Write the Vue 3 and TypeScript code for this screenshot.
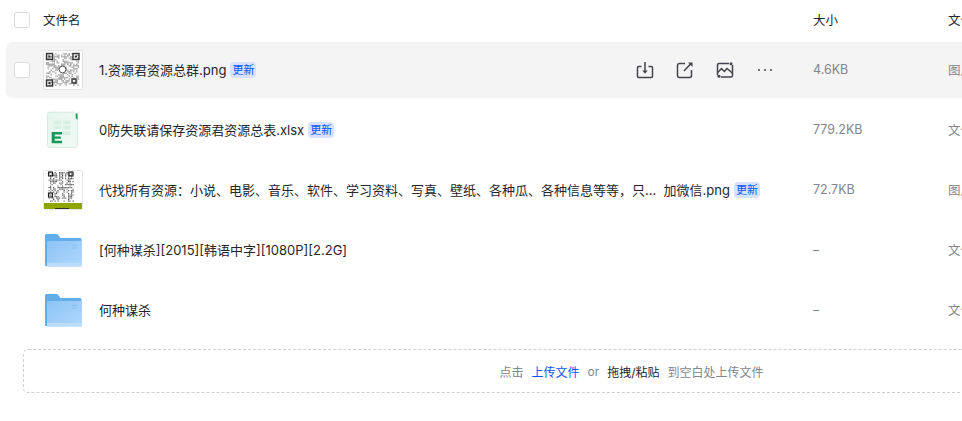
<template>
  <div class="page">
    <div class="list">
      <div class="head">
        <span class="check"></span>
        <span class="col-name lift">文件名</span>
        <span class="col-size lift">大小</span>
        <span class="col-type lift">文件类型</span>
      </div>

      <div v-for="(file, i) in files" :key="file.name" class="row" :class="{ active: i === 0 }">
        <span class="check" :class="{ hidden: i !== 0 }"></span>
        <div class="col-name name-cell">
          <div class="thumb">
            <svg v-if="file.kind === 'qr'" class="qr" width="40" height="40" viewBox="0 0 40 40">
              <rect x="0.5" y="0.5" width="39" height="39" rx="1.5" fill="#fff" stroke="#e2e2e2" />
              <rect v-for="c in qrCells" :key="c.x + '-' + c.y" :x="c.x" :y="c.y" width="1.5" height="1.5" fill="#555" :opacity="c.o" />
              <g fill="none" stroke="#333" stroke-width="1.4">
                <rect x="3.5" y="3.5" width="6" height="6" />
                <rect x="30" y="3.5" width="6" height="6" />
                <rect x="3.5" y="30" width="6" height="6" />
                <rect x="29" y="29" width="4" height="4" />
              </g>
              <g fill="#333">
                <rect x="5.5" y="5.5" width="2" height="2" />
                <rect x="32" y="5.5" width="2" height="2" />
                <rect x="5.5" y="32" width="2" height="2" />
              </g>
              <circle cx="19.5" cy="19.5" r="3.4" fill="#fff" stroke="#555" stroke-width="1" />
            </svg>

            <svg v-else-if="file.kind === 'poster'" class="qr" width="40" height="40" viewBox="0 0 40 40">
              <rect x="0.5" y="0.5" width="39" height="39" rx="1.5" fill="#fff" stroke="#e8e8e8" />
              <rect v-for="c in posterCells" :key="c.x + '-' + c.y" :x="c.x" :y="c.y" width="1.2" height="1.2" fill="#222" :opacity="c.o" />
              <g fill="none" stroke="#222" stroke-width="1.1">
                <rect x="5.5" y="2" width="4" height="4" />
                <rect x="26" y="2" width="4" height="4" />
                <rect x="5.5" y="23" width="4" height="4" />
              </g>
              <rect x="1" y="33" width="38" height="6" fill="#8fa600" />
              <rect x="12" y="38" width="14" height="1" fill="#333" />
            </svg>

            <svg v-else-if="file.kind === 'excel'" width="32" height="38" viewBox="0 0 34 40">
              <defs>
                <linearGradient id="sheet" x1="0" y1="0" x2="1" y2="1">
                  <stop offset="0" stop-color="#e6f5ee" />
                  <stop offset="1" stop-color="#f2faf6" />
                </linearGradient>
              </defs>
              <path d="M3 1h26l3.500 3.500V36a2.500 2.500 0 0 1-2.500 2.500H3A2.500 2.500 0 0 1 .5 36V3.500A2.500 2.500 0 0 1 3 1z" fill="url(#sheet)" stroke="#d5ebdf" />
              <path d="M30.500 2.500h2v6.500l-2-1.500z" fill="#1b9d5c" />
              <g fill="#d8efe3">
                <rect x="7" y="10" width="8" height="4" />
                <rect x="17" y="10" width="8" height="4" />
                <rect x="7" y="15.500" width="8" height="3.500" />
                <rect x="17" y="15.500" width="8" height="4" />
                <rect x="17" y="21.500" width="8" height="4" />
              </g>
              <path d="M5 22h11v2.800H8.200v2.100h6.500v2.500H8.200v2H16V34H5z" fill="#17985a" />
            </svg>

            <svg v-else width="38" height="36" viewBox="0 0 38 36">
              <defs>
                <linearGradient id="folder" x1="0" y1="0" x2="1" y2="1">
                  <stop offset="0" stop-color="#8cc3f4" />
                  <stop offset="1" stop-color="#b0d8fd" />
                </linearGradient>
              </defs>
              <path d="M1 3.500C1 2.700 1.700 2 2.500 2h10.300c.6 0 1 .3 1.300.7L16.500 6H36c.9 0 1.500.7 1.500 1.500V34H2c-.6 0-1-.4-1-1z" fill="#62aeec" />
              <path d="M3 9h33.500c.6 0 1 .4 1 1v24.500H3z" fill="url(#folder)" />
              <rect x="3" y="31" width="34.500" height="3.500" fill="#bcdcfb" />
              <g fill="#86bff2">
                <rect x="28" y="13" width="5" height="1" />
                <rect x="28" y="15.500" width="5" height="1" />
              </g>
            </svg>
          </div>
          <span class="file-name lift">{{ file.name }}</span>
          <span v-if="file.fresh" class="badge">更新</span>
          <div v-if="i === 0" class="actions">
            <svg width="20" height="20" viewBox="0 0 20 20" fill="none" stroke="#44454c" stroke-width="1.500">
              <path d="M6.500 6.500H3.700A1.200 1.200 0 0 0 2.500 7.700v8.600a1.200 1.200 0 0 0 1.200 1.200h12.600a1.200 1.200 0 0 0 1.200-1.200V7.700a1.200 1.200 0 0 0-1.200-1.200h-2.800" />
              <path d="M10 2v10" />
              <path d="M7.300 10.500h5.400L10 13.800z" fill="#44454c" stroke="none" />
            </svg>
            <svg width="20" height="20" viewBox="0 0 20 20" fill="none" stroke="#44454c" stroke-width="1.500">
              <path d="M10 3.500H4.500a2 2 0 0 0-2 2v10a2 2 0 0 0 2 2h10a2 2 0 0 0 2-2V10" />
              <path d="M9 11l7-7.500" />
              <path d="M13 2.500h4.500V7z" fill="#44454c" stroke="none" />
            </svg>
            <svg width="20" height="20" viewBox="0 0 20 20" fill="none" stroke="#44454c" stroke-width="1.500">
              <path d="M14 3.500H4a1.500 1.500 0 0 0-1.500 1.500v10.500" />
              <path d="M6 17H16a1.500 1.500 0 0 0 1.500-1.500V5" />
              <path d="M2.700 12.500l3.800-4 2.800 3 2.700-3 5.300 4.500" />
              <circle cx="16" cy="3.800" r="1.500" fill="#44454c" stroke="none" />
              <circle cx="4" cy="16.200" r="1.500" fill="#44454c" stroke="none" />
            </svg>
            <svg width="20" height="20" viewBox="0 0 20 20" fill="#44454c">
              <circle cx="4" cy="10" r="1" />
              <circle cx="10" cy="10" r="1" />
              <circle cx="16" cy="10" r="1" />
            </svg>
          </div>
        </div>
        <span class="col-size muted lift">{{ file.size }}</span>
        <span class="col-type muted lift">{{ file.type }}</span>
      </div>

      <div class="upload">
        <span class="muted">点击</span>
        <span class="link">上传文件</span>
        <span class="muted">or</span>
        <span class="strong">拖拽/粘贴</span>
        <span class="muted">到空白处上传文件</span>
      </div>
    </div>
  </div>
</template>

<script setup lang="ts">
interface FileRow {
  name: string;
  kind: 'qr' | 'poster' | 'excel' | 'folder';
  size: string;
  type: string;
  fresh: boolean;
}

const files: FileRow[] = [
  { name: '1.资源君资源总群.png', kind: 'qr', size: '4.6KB', type: '图片', fresh: true },
  { name: '0防失联请保存资源君资源总表.xlsx', kind: 'excel', size: '779.2KB', type: '文件', fresh: true },
  {
    name: '代找所有资源：小说、电影、音乐、软件、学习资料、写真、壁纸、各种瓜、各种信息等等，只…  加微信.png',
    kind: 'poster',
    size: '72.7KB',
    type: '图片',
    fresh: true
  },
  { name: '[何种谋杀][2015][韩语中字][1080P][2.2G]', kind: 'folder', size: '–', type: '文件夹', fresh: false },
  { name: '何种谋杀', kind: 'folder', size: '–', type: '文件夹', fresh: false }
];

// 伪随机，保证每次画出来的二维码一样
function noise(x: number, y: number): number {
  const v = Math.sin(x * 12.9898 + y * 78.233) * 43758.5453;
  return v - Math.floor(v);
}

function cells(x0: number, x1: number, y0: number, y1: number, step: number, base: number) {
  const out: { x: number; y: number; o: number }[] = [];
  for (let y = y0; y < y1; y += step) {
    for (let x = x0; x < x1; x += step) {
      const n = noise(x, y);
      if (n > 0.5) out.push({ x, y, o: base + n * 0.4 });
    }
  }
  return out;
}

const qrCells = cells(3, 36, 3, 36, 1.5, 0.15);
const posterCells = cells(5.5, 31, 2, 31, 1.5, 0.4);
</script>

<style scoped>
.page {
  width: 962px;
  height: 421px;
  overflow: hidden;
  background: #fff;
  font-family: Inter, "Noto Sans CJK SC", "Liberation Sans", sans-serif;
  font-size: 12.500px;
  color: #25262b;
}

.list {
  width: 1234px;
  padding-left: 6px;
}

.head,
.row {
  display: flex;
  align-items: center;
  padding-left: 8px;
}

.head {
  height: 40px;
  margin-bottom: 2px;
}

.row {
  height: 56px;
  margin-bottom: 4px;
  border-radius: 6px 0 0 6px;
}

.row.active {
  background: #f4f4f4;
}

.check {
  flex: none;
  width: 14px;
  height: 14px;
  background: #fff;
  border: 1px solid #dcdcdc;
  border-radius: 3px;
}

.check.hidden {
  visibility: hidden;
}

.lift {
  margin-bottom: 2px;
}

.col-name {
  flex: none;
  width: 770px;
  margin-left: 13px;
}

.col-size {
  flex: none;
  width: 135px;
}

.col-type {
  flex: none;
  width: 80px;
}

.name-cell {
  display: flex;
  align-items: center;
}

.thumb {
  flex: none;
  width: 40px;
  height: 40px;
  margin-right: 16px;
  display: flex;
  align-items: center;
  justify-content: center;
}

.file-name {
  white-space: pre;
  font-size: 13px;
}

.badge {
  flex: none;
  width: 26px;
  height: 16px;
  margin-left: 4px;
  border-radius: 4px;
  background: #d6e2ff;
  color: #0d53ff;
  font-size: 11px;
  line-height: 16px;
  text-align: center;
}

.actions {
  margin-left: auto;
  margin-right: 38px;
  display: flex;
  gap: 20px;
}

.muted {
  color: #84858d;
}

.upload {
  height: 44px;
  margin: 11px 0 0 17px;
  border: 1px dashed #cfcfcf;
  border-radius: 5px;
  box-sizing: border-box;
  display: flex;
  align-items: center;
  justify-content: center;
  gap: 8px;
  font-size: 12px;
}

.link {
  color: #0d53ff;
}

.strong {
  color: #25262b;
}
</style>
